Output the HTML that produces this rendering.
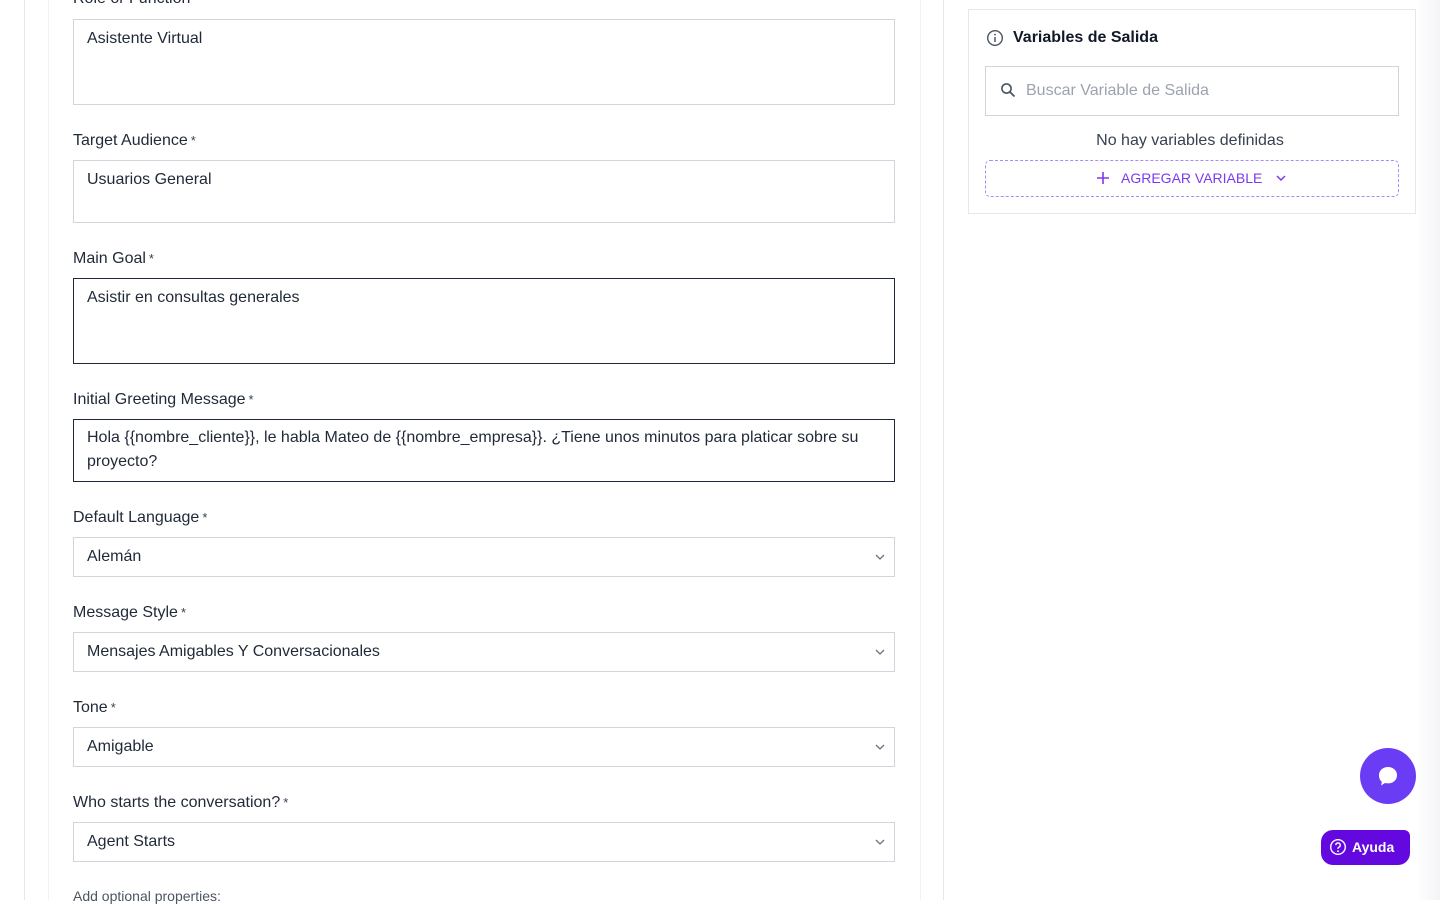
<!DOCTYPE html>
<html><head><meta charset="utf-8"><style>
*{box-sizing:border-box;margin:0;padding:0}
body{width:1440px;height:900px;overflow:hidden;background:#fff;font-family:"Liberation Sans",sans-serif;color:#1f2937;position:relative}
.a{position:absolute}
.lbl{position:absolute;left:73px;font-size:16px;line-height:20px;color:#1f2937}
.lbl span{color:#374151;font-size:13px;vertical-align:top;margin-left:3px}
.box{position:absolute;left:73px;width:822px;border:1px solid #d1d5db;background:#fff;font-size:16px;line-height:24px;padding:7px 13px;color:#1f2937}
.dark{border-color:#1f2937}
.sel{padding:7px 13px}
.chev{position:absolute;right:9px;top:50%;margin-top:-3px;width:10px;height:6px}
</style></head><body>
<div class="a" style="left:24px;top:0;width:1px;height:900px;background:#e5e7eb"></div>
<div class="a" style="left:48px;top:0;width:1px;height:900px;background:#f1f2f4"></div>
<div class="a" style="left:920px;top:0;width:1px;height:900px;background:#f1f2f4"></div>
<div class="a" style="left:943px;top:0;width:1px;height:900px;background:#e5e7eb"></div>
<div class="a" style="left:1416px;top:0;width:24px;height:900px;background:linear-gradient(90deg,#fff,#f3f4f6)"></div>

<div class="lbl" style="top:-11px">Role or Function</div>
<div class="box" style="top:19px;height:86px">Asistente Virtual</div>
<div class="lbl" style="top:131px">Target Audience<span>*</span></div>
<div class="box" style="top:160px;height:63px">Usuarios General</div>
<div class="lbl" style="top:249px">Main Goal<span>*</span></div>
<div class="box dark" style="top:278px;height:86px">Asistir en consultas generales</div>
<div class="lbl" style="top:390px">Initial Greeting Message<span>*</span></div>
<div class="box dark" style="top:419px;height:63px;padding-top:6px">Hola {{nombre_cliente}}, le habla Mateo de {{nombre_empresa}}. ¿Tiene unos minutos para platicar sobre su proyecto?</div>
<div class="lbl" style="top:508px">Default Language<span>*</span></div>
<div class="box sel" style="top:537px;height:40px">Alemán<svg class="chev" viewBox="0 0 10 6"><path d="M1 1l4 4 4-4" fill="none" stroke="#6b7280" stroke-width="1.3"/></svg></div>
<div class="lbl" style="top:603px">Message Style<span>*</span></div>
<div class="box sel" style="top:632px;height:40px">Mensajes Amigables Y Conversacionales<svg class="chev" viewBox="0 0 10 6"><path d="M1 1l4 4 4-4" fill="none" stroke="#6b7280" stroke-width="1.3"/></svg></div>
<div class="lbl" style="top:698px">Tone<span>*</span></div>
<div class="box sel" style="top:727px;height:40px">Amigable<svg class="chev" viewBox="0 0 10 6"><path d="M1 1l4 4 4-4" fill="none" stroke="#6b7280" stroke-width="1.3"/></svg></div>
<div class="lbl" style="top:793px">Who starts the conversation?<span>*</span></div>
<div class="box sel" style="top:822px;height:40px">Agent Starts<svg class="chev" viewBox="0 0 10 6"><path d="M1 1l4 4 4-4" fill="none" stroke="#6b7280" stroke-width="1.3"/></svg></div>
<div class="lbl" style="top:886px;font-size:14px;color:#4b5563">Add optional properties:</div>

<div class="a" style="left:968px;top:9px;width:448px;height:205px;border:1px solid #e5e7eb;background:#fff"></div>
<svg class="a" style="left:986px;top:29px" width="18" height="18" viewBox="0 0 18 18"><circle cx="9" cy="9" r="7.3" fill="none" stroke="#4b5563" stroke-width="1.4"/><path d="M9 8v5" stroke="#4b5563" stroke-width="1.5"/><circle cx="9" cy="5.6" r="0.9" fill="#4b5563"/></svg>
<div class="a" style="left:1013px;top:28px;font-size:16px;font-weight:bold;line-height:20px;color:#111827">Variables de Salida</div>
<div class="a" style="left:985px;top:66px;width:414px;height:50px;border:1px solid #d1d5db"></div>
<svg class="a" style="left:1000px;top:82px" width="16" height="16" viewBox="0 0 16 16"><circle cx="6.5" cy="6.5" r="4.6" fill="none" stroke="#4b5563" stroke-width="1.6"/><path d="M10 10l4.5 4.5" stroke="#4b5563" stroke-width="1.8"/></svg>
<div class="a" style="left:1026px;top:81px;font-size:16px;line-height:20px;color:#9ca3af">Buscar Variable de Salida</div>
<div class="a" style="left:983px;width:414px;top:131px;text-align:center;font-size:16px;line-height:20px;color:#374151">No hay variables definidas</div>
<div class="a" style="left:985px;top:160px;width:414px;height:37px;border:1px dashed #a78bfa;border-radius:5px"></div>
<svg class="a" style="left:1096px;top:171px" width="14" height="14" viewBox="0 0 14 14"><path d="M7 1v12M1 7h12" stroke="#7c3aed" stroke-width="1.6"/></svg>
<div class="a" style="left:1121px;top:170px;font-size:14px;line-height:16px;color:#7c3aed">AGREGAR VARIABLE</div>
<svg class="a" style="left:1276px;top:175px" width="10" height="6" viewBox="0 0 10 6"><path d="M1 1l4 4 4-4" fill="none" stroke="#7c3aed" stroke-width="1.5"/></svg>

<div class="a" style="left:1360px;top:748px;width:56px;height:56px;border-radius:50%;background:#6a3df5"></div>
<svg class="a" style="left:1376px;top:764px" width="24" height="24" viewBox="0 0 24 24"><path d="M12 3c5 0 9 3.4 9 8.2s-4 8.2-9 8.2c-1 0-2-.1-2.9-.4L5 21.5l.9-3.6C4 16.4 3 14 3 11.2 3 6.4 7 3 12 3z" fill="#fff"/></svg>
<div class="a" style="left:1321px;top:830px;width:89px;height:35px;border-radius:12px 6px 12px 12px;background:#6309e0"></div>
<svg class="a" style="left:1329px;top:838px" width="18" height="18" viewBox="0 0 18 18"><circle cx="9" cy="9" r="7.3" fill="none" stroke="#fff" stroke-width="1.4"/><path d="M6.8 7.1a2.2 2.2 0 1 1 3 2.1c-.6.3-.8.7-.8 1.3v.4" fill="none" stroke="#fff" stroke-width="1.4"/><circle cx="9" cy="13.2" r=".9" fill="#fff"/></svg>
<div class="a" style="left:1352px;top:839px;font-size:14px;font-weight:bold;line-height:16px;color:#fff">Ayuda</div>
</body></html>
